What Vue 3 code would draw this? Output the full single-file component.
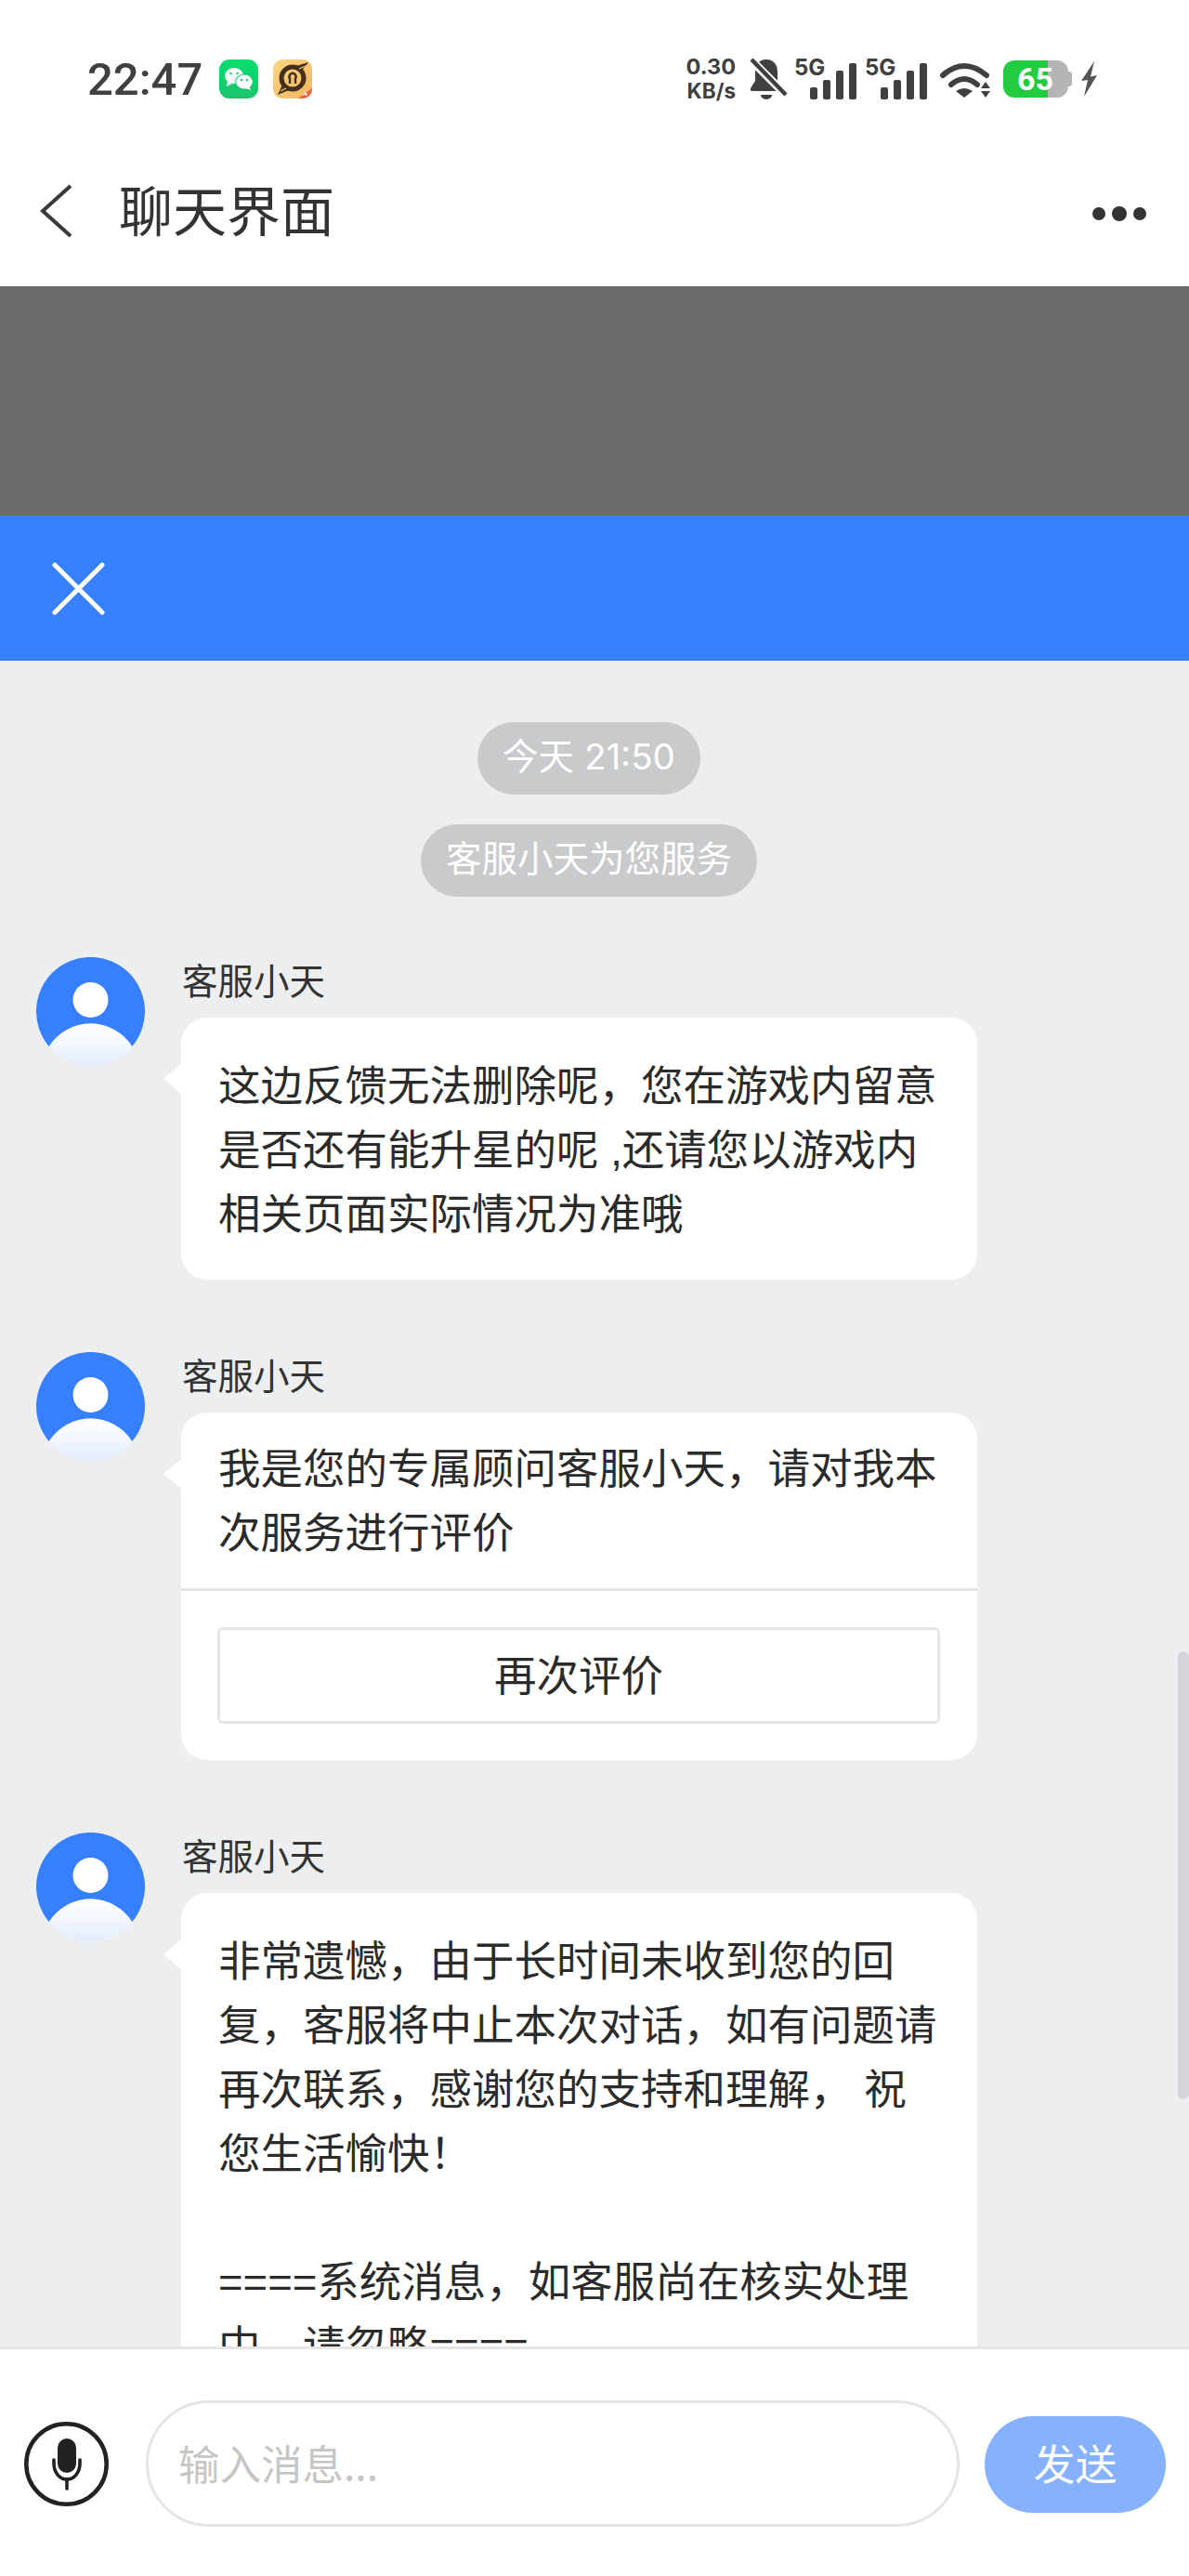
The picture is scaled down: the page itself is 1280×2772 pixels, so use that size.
<script setup>
const messages = [
  { text: '这边反馈无法删除呢，您在游戏内留意是否还有能升星的呢 ,还请您以游戏内相关页面实际情况为准哦' },
  { text: '我是您的专属顾问客服小天，请对我本次服务进行评价', action: '再次评价' },
  { text: '非常遗憾，由于长时间未收到您的回复，客服将中止本次对话，如有问题请再次联系，感谢您的支持和理解， 祝您生活愉快！\n\n====系统消息，如客服尚在核实处理中，请忽略====' }
];
</script>

<template>
  <div class="page">
    <div class="status">
      <div class="status-left">
        <span class="time">22:47</span>
        <svg class="app-icon wechat" width="42" height="42" viewBox="0 0 42 42">
          <defs>
            <linearGradient id="wx" x1="0" y1="0" x2="0" y2="1">
              <stop offset="0" stop-color="#07dd6d" />
              <stop offset="1" stop-color="#1bc46c" />
            </linearGradient>
          </defs>
          <rect width="42" height="42" rx="11" fill="url(#wx)" />
          <ellipse cx="16" cy="17.5" rx="10" ry="8.5" fill="#fff" />
          <path d="M9 23l-1 6 6-3z" fill="#fff" />
          <ellipse cx="27" cy="24" rx="10" ry="8.6" fill="#1ccb6c" />
          <ellipse cx="27" cy="24" rx="8.8" ry="7.5" fill="#fff" />
          <path d="M32 29l2 4-6-2z" fill="#fff" />
          <circle cx="12.5" cy="15" r="1.3" fill="#1ccb6c" />
          <circle cx="19.5" cy="15" r="1.3" fill="#1ccb6c" />
          <circle cx="24" cy="22" r="1.2" fill="#1ccb6c" />
          <circle cx="30" cy="22" r="1.2" fill="#1ccb6c" />
        </svg>
        <svg class="app-icon game" width="42" height="42" viewBox="0 0 42 42">
          <defs>
            <linearGradient id="gm" x1="0" y1="0" x2="1" y2="1">
              <stop offset="0" stop-color="#fbd583" />
              <stop offset="1" stop-color="#f2b65f" />
            </linearGradient>
          </defs>
          <rect width="42" height="42" rx="10" fill="url(#gm)" />
          <circle cx="21" cy="20" r="12" fill="none" stroke="#46301c" stroke-width="5" />
          <path d="M31 12L38 3L25 7ZM10 27L5 38L17 33Z" fill="#46301c" />
          <path d="M28 10L35 7M14 31L8 34" stroke="#f6c46f" stroke-width="1.2" />
          <path d="M18 26v-5.5a3.6 3.6 0 1 1 6 0V26" fill="none" stroke="#46301c" stroke-width="2.4" />
          <path d="M27 42L42 31v1a10 10 0 0 1-10 10z" fill="#f0643c" />
          <path d="M34 35l2 4M32 38l5-1" stroke="#fff" stroke-width="1" />
        </svg>
      </div>
      <div class="status-right">
        <div class="speed">
          <span class="speed-num">0.30</span>
          <span class="speed-unit">KB/s</span>
        </div>
        <svg class="bell" width="41" height="45" viewBox="0 0 41 45">
          <path d="M18 1C10 1 6 7 6 14V24L1 32Q0 35 3 35H33Q36 35 35 32L30 24V14C30 7 26 1 18 1Z" fill="#404040" />
          <path d="M12 39H24A6 5 0 0 1 12 39Z" fill="#404040" />
          <line x1="0" y1="0" x2="40" y2="40" stroke="#fff" stroke-width="9" />
          <line x1="2" y1="1" x2="39" y2="39" stroke="#404040" stroke-width="4.5" />
        </svg>
        <svg v-for="n in 2" :key="n" class="signal" width="67" height="51" viewBox="0 -6 67 51">
          <text class="net" x="0" y="18">5G</text>
          <rect x="17" y="31" width="8" height="13" rx="2" fill="#404040" />
          <rect x="31" y="23" width="8" height="21" rx="2" fill="#404040" />
          <rect x="45" y="13" width="8" height="31" rx="2" fill="#404040" />
          <rect x="59" y="5" width="8" height="39" rx="2" fill="#404040" />
        </svg>
        <svg class="wifi" width="54" height="38" viewBox="0 0 54 38">
          <path d="M3 14Q26 -6 50 14" fill="none" stroke="#404040" stroke-width="6" stroke-linecap="round" />
          <path d="M12 24Q26 12 40 24" fill="none" stroke="#404040" stroke-width="6" stroke-linecap="round" />
          <path d="M17 31Q26 25 35 31L26 38Z" fill="#404040" />
          <path d="M44 28L49 21L54 28ZM44 31L49 38L54 31Z" fill="#404040" />
        </svg>
        <svg class="battery" width="74" height="40" viewBox="0 0 74 40">
          <path d="M12 0H48V40H12A12 12 0 0 1 0 28V12A12 12 0 0 1 12 0Z" fill="#22cc3e" />
          <path d="M48 0H58A12 12 0 0 1 70 12V28A12 12 0 0 1 58 40H48Z" fill="#b5b5b5" />
          <path d="M70 12H71A3 3 0 0 1 74 15V25A3 3 0 0 1 71 28H70Z" fill="#b5b5b5" />
          <text class="level" x="34.5" y="31.5">65</text>
        </svg>
        <svg class="bolt" width="19" height="38" viewBox="0 0 19 38">
          <path d="M15 0L1 21L8 20L4 38L18 15L11 16.5L15 0Z" fill="#555" />
        </svg>
      </div>
    </div>

    <header class="topbar">
      <svg class="back" width="36" height="58" viewBox="0 0 36 58">
        <path d="M33 2L3 29L33 56" fill="none" stroke="#3a3a3a" stroke-width="4" />
      </svg>
      <span class="title">聊天界面</span>
      <div class="dots"><i></i><i class="mid"></i><i></i></div>
    </header>

    <div class="banner"></div>

    <div class="bluebar">
      <svg width="57" height="57" viewBox="0 0 57 57">
        <path d="M3 3L54 54M54 3L3 54" stroke="#fff" stroke-width="5" stroke-linecap="round" />
      </svg>
    </div>

    <main class="chat">
      <div class="notices">
        <span class="notice">今天 21:50</span>
        <span class="notice">客服小天为您服务</span>
      </div>

      <div v-for="(m, i) in messages" :key="i" class="msg">
        <svg class="avatar" width="117" height="117" viewBox="0 0 117 117">
          <defs>
            <linearGradient :id="'body' + i" x1="0" y1="0" x2="0" y2="1">
              <stop offset="0" stop-color="#ffffff" />
              <stop offset="1" stop-color="#e3edff" />
            </linearGradient>
          </defs>
          <path d="M13.7 96A58.5 58.5 0 1 1 103.3 96Z" fill="#367fff" />
          <circle cx="58.5" cy="46" r="19" fill="#fff" />
          <path d="M13.7 96A53 53 0 0 1 103.3 96A58.5 58.5 0 0 1 13.7 96Z" :fill="'url(#body' + i + ')'" />
        </svg>
        <div class="msg-body">
          <div class="name">客服小天</div>
          <div class="bubble">
            <div class="text" :class="{ 'has-action': m.action }">{{ m.text }}</div>
            <div v-if="m.action" class="action-wrap">
              <button class="action">{{ m.action }}</button>
            </div>
          </div>
        </div>
      </div>

      <div class="scrollbar"></div>
    </main>

    <footer class="inputbar">
      <svg class="mic" width="91" height="91" viewBox="0 0 91 91">
        <circle cx="45.5" cy="45.5" r="43.2" fill="none" stroke="#222" stroke-width="4.5" />
        <rect x="36" y="18" width="20" height="37" rx="10" fill="#222" />
        <path d="M32 41V45A14 17 0 0 0 60 45V41" fill="none" stroke="#222" stroke-width="3.6" stroke-linecap="round" />
        <line x1="46" y1="62" x2="46" y2="72" stroke="#222" stroke-width="3.6" stroke-linecap="round" />
      </svg>
      <input class="field" placeholder="输入消息..." />
      <button class="send">发送</button>
    </footer>
  </div>
</template>

<style scoped>
.page {
  width: 1280px;
  height: 2772px;
  display: flex;
  flex-direction: column;
  overflow: hidden;
  background: #fff;
  font-family: "Noto Sans CJK SC", "Noto Sans", sans-serif;
}

.status {
  height: 120px;
  margin-top: 25px;
  flex-shrink: 0;
  display: flex;
  align-items: center;
  justify-content: space-between;
  padding: 0 98px 0 94px;
  color: #404040;
  font-family: Inter, sans-serif;
}
.status-left { display: flex; align-items: center; }
.status-right { display: flex; align-items: center; }
.time { font-family: Roboto, sans-serif; font-size: 49px; font-weight: 500; width: 142px; line-height: 1; }
.game { margin-left: 16px; }

.speed { display: flex; flex-direction: column; align-items: flex-end; font-weight: 700; line-height: 26px; }
.speed-num { font-size: 23.5px; }
.speed-unit { font-size: 22.5px; }
.bell { margin-left: 15px; }
.signal { margin-left: 7px; margin-top: -6px; }
.signal + .signal { margin-left: 9px; }
.net { font-size: 24px; font-weight: 700; fill: #404040; }
.wifi { margin-left: 14px; margin-top: 2px; }
.battery { margin-left: 14px; }
.level { font-family: Roboto, sans-serif; font-size: 34px; font-weight: 700; fill: #fff; text-anchor: middle; }
.bolt { margin-left: 9px; }

.topbar {
  height: 163px;
  flex-shrink: 0;
  display: flex;
  align-items: center;
  padding: 0 46px 0 43px;
  color: #333;
}
.back { margin-right: 49px; }
.title { font-size: 58px; line-height: 1; flex: 1; margin-top: -6px; }
.dots { display: flex; align-items: center; gap: 7px; margin-top: 6px; }
.dots i { display: block; width: 14px; height: 14px; border-radius: 50%; background: #333; }
.dots i.mid { width: 16px; height: 16px; }

.banner { height: 247px; flex-shrink: 0; background: #6a6b6d; }

.bluebar {
  height: 156px;
  flex-shrink: 0;
  display: flex;
  align-items: center;
  padding-left: 56px;
  background: #367fff;
}

.chat {
  flex: 1;
  min-height: 0;
  position: relative;
  overflow: hidden;
  padding-top: 66px;
  background: #edeef0;
  color: #2b2b2b;
}

.notices {
  display: flex;
  flex-direction: column;
  align-items: center;
  gap: 32px;
  margin-bottom: 65px;
  padding-right: 12px;
}
.notice {
  height: 78px;
  line-height: 75px;
  padding: 0 27px;
  border-radius: 39px;
  background: #c9cacc;
  color: #fff;
  font-family: Inter, "Noto Sans CJK SC", sans-serif;
  font-size: 38.5px;
}

.msg { display: flex; padding-left: 39px; margin-bottom: 78px; }
.avatar { flex-shrink: 0; }
.msg-body { margin-left: 39px; width: 857px; }
.name { height: 65px; line-height: 47px; padding-left: 1px; font-size: 38.5px; color: #333; }

.bubble { position: relative; background: #fff; border-radius: 28px; }
.bubble::before {
  content: "";
  position: absolute;
  left: -19px;
  top: 50px;
  border-top: 16px solid transparent;
  border-bottom: 16px solid transparent;
  border-right: 19px solid #fff;
}
.text {
  padding: 40px 40px 35px;
  font-family: "Liberation Sans", "Noto Sans CJK SC", sans-serif;
  font-size: 45.5px;
  line-height: 69px;
  white-space: pre-wrap;
}
.text.has-action { padding-top: 27px; padding-bottom: 24px; }
.action-wrap { border-top: 3px solid #e5e5e5; padding: 39px 40px 39px 39px; }
.action {
  display: block;
  width: 100%;
  height: 104px;
  padding: 0 0 7px;
  background: #fff;
  border: 3px solid #e5e5e5;
  border-radius: 6px;
  color: #2b2b2b;
  font-family: inherit;
  font-size: 45.5px;
}

.scrollbar {
  position: absolute;
  right: 0;
  top: 1066px;
  width: 12px;
  height: 482px;
  border-radius: 6px;
  background: #d3d5d8;
}

.inputbar {
  height: 247px;
  flex-shrink: 0;
  box-sizing: border-box;
  display: flex;
  align-items: center;
  padding: 0 25px 0 26px;
  border-top: 3px solid #e5e5e5;
  background: #fff;
}
.mic { flex-shrink: 0; margin-top: 2px; }
.field {
  width: 876px;
  height: 136px;
  box-sizing: border-box;
  margin-left: 40px;
  margin-top: 2px;
  padding: 0 32px 4px;
  border: 3px solid #e5e5e5;
  border-radius: 68px;
  outline: none;
  background: #fff;
  font-family: inherit;
  font-size: 44.5px;
}
.field::placeholder { color: #c6c6c6; opacity: 1; }
.send {
  width: 195px;
  height: 104px;
  margin-left: 27px;
  margin-top: 4px;
  padding: 0 0 6px;
  border: none;
  border-radius: 52px;
  background: #85b1ff;
  color: #fff;
  font-family: inherit;
  font-size: 45px;
}
</style>
